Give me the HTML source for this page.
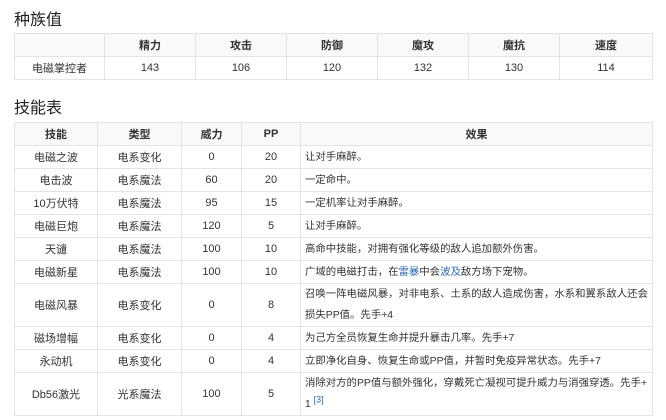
<!DOCTYPE html>
<html><head><meta charset="utf-8"><style>
body{margin:0;background:#fff;font-family:"Liberation Sans","Noto Sans CJK SC",sans-serif;color:#333;font-size:11px;}
h2{font-weight:normal;font-size:16px;margin:0;position:absolute;left:14px;color:#222;}
table{position:absolute;left:14px;border-collapse:collapse;table-layout:fixed;}
td,th{border:1px solid #e4e4e4;text-align:center;padding:0 3px;height:22px;vertical-align:middle;}
th{background:#f8f9fa;font-weight:bold;}
td.l{text-align:left;line-height:21px;font-size:10.4px;padding:0 4px;}
a{color:#2a6db5;text-decoration:none}
sup{color:#2a6db5;font-size:9px;line-height:0}
</style></head><body>
<h2 style="top:6px">种族值</h2>
<table style="top:33px;width:639px">
<colgroup><col style="width:90px"><col style="width:91px"><col style="width:91px"><col style="width:91px"><col style="width:91px"><col style="width:91px"><col></colgroup>
<tr><th></th><th>精力</th><th>攻击</th><th>防御</th><th>魔攻</th><th>魔抗</th><th>速度</th></tr>
<tr><td>电磁掌控者</td><td>143</td><td>106</td><td>120</td><td>132</td><td>130</td><td>114</td></tr>
</table>
<h2 style="top:94px">技能表</h2>
<table style="top:122px;width:639px">
<colgroup><col style="width:83px"><col style="width:84px"><col style="width:60px"><col style="width:59px"><col></colgroup>
<tr><th>技能</th><th>类型</th><th>威力</th><th>PP</th><th>效果</th></tr>
<tr><td>电磁之波</td><td>电系变化</td><td>0</td><td>20</td><td class="l">让对手麻醉。</td></tr>
<tr><td>电击波</td><td>电系魔法</td><td>60</td><td>20</td><td class="l">一定命中。</td></tr>
<tr><td>10万伏特</td><td>电系魔法</td><td>95</td><td>15</td><td class="l">一定机率让对手麻醉。</td></tr>
<tr><td>电磁巨炮</td><td>电系魔法</td><td>120</td><td>5</td><td class="l">让对手麻醉。</td></tr>
<tr><td>天谴</td><td>电系魔法</td><td>100</td><td>10</td><td class="l">高命中技能，对拥有强化等级的敌人追加额外伤害。</td></tr>
<tr><td>电磁新星</td><td>电系魔法</td><td>100</td><td>10</td><td class="l">广域的电磁打击，在<a>雷暴</a>中会<a>波及</a>敌方场下宠物。</td></tr>
<tr><td style="height:42px">电磁风暴</td><td>电系变化</td><td>0</td><td>8</td><td class="l">召唤一阵电磁风暴，对非电系、土系的敌人造成伤害，水系和翼系敌人还会<br>损失PP值。先手+4</td></tr>
<tr><td>磁场增幅</td><td>电系变化</td><td>0</td><td>4</td><td class="l">为己方全员恢复生命并提升暴击几率。先手+7</td></tr>
<tr><td>永动机</td><td>电系变化</td><td>0</td><td>4</td><td class="l">立即净化自身、恢复生命或PP值，并暂时免疫异常状态。先手+7</td></tr>
<tr><td style="height:42px">Db56激光</td><td>光系魔法</td><td>100</td><td>5</td><td class="l">消除对方的PP值与额外强化，穿戴死亡凝视可提升威力与消强穿透。先手+<br>1 <sup>[3]</sup></td></tr>
</table>
</body></html>
